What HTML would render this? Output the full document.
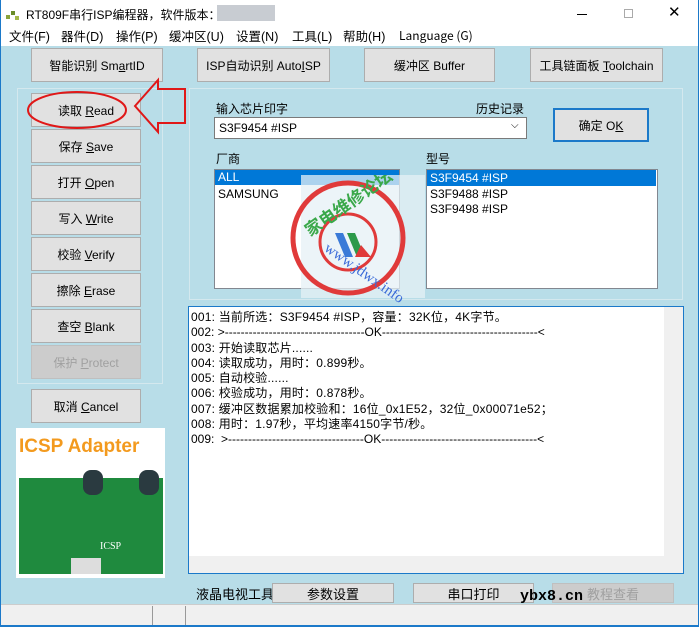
<!DOCTYPE html>
<html><head><meta charset="utf-8"><style>
*{box-sizing:border-box;margin:0;padding:0}
body{width:699px;height:627px;overflow:hidden;background:#fff;font-family:"Liberation Sans","Noto Sans CJK SC",sans-serif;font-size:12px;color:#000;position:relative}
.a{position:absolute}
.btn{position:absolute;background:#e1e1e1;border:1px solid #adadad;text-align:center;font-size:12px;display:flex;align-items:center;justify-content:center}
.dis{color:#a0a0a0;background:#cccccc;border-color:#bfbfbf}
.grp{position:absolute;border:1px solid #d4e8ee;}
u{text-decoration:underline}
.log div{height:15.3px;line-height:15.3px;white-space:nowrap;letter-spacing:0.2px}
.log .d{letter-spacing:0}
.m{position:absolute;top:29px;font-size:12.5px;line-height:16px;height:16px}
</style></head><body>
<div class="a" style="left:0;top:0;width:699px;height:627px;border:1px solid #1b79c9;border-top:none"></div>
<!-- title -->
<div class="a" style="left:6px;top:10px;width:14px;height:10px">
<div class="a" style="left:0;top:5px;width:4px;height:4px;background:#8aa33a"></div>
<div class="a" style="left:5px;top:1px;width:4px;height:4px;background:#6b8d2a"></div>
<div class="a" style="left:9px;top:6px;width:4px;height:4px;background:#a4b94a"></div></div>
<div class="a" style="left:26px;top:6px;font-size:12px">RT809F串行ISP编程器，软件版本：</div>
<div class="a" style="left:217px;top:5px;width:58px;height:16px;background:#c8ccd2"></div>
<div class="a" style="left:577px;top:14px;width:10px;height:1px;background:#000"></div>
<div class="a" style="left:624px;top:9px;width:9px;height:9px;border:1px solid #aaa"></div>
<div class="a" style="left:668px;top:3px;font-size:15px">✕</div>
<!-- menu -->
<div class="m" style="left:9px">文件(F)</div>
<div class="m" style="left:61px">器件(D)</div>
<div class="m" style="left:116px">操作(P)</div>
<div class="m" style="left:169px">缓冲区(U)</div>
<div class="m" style="left:236px">设置(N)</div>
<div class="m" style="left:292px">工具(L)</div>
<div class="m" style="left:343px">帮助(H)</div>
<div class="m" style="left:399px;font-family:'Noto Sans CJK SC',sans-serif;font-size:12px;top:28px">Language (G)</div>
<!-- body -->
<div class="a" style="left:1px;top:46px;width:697px;height:558px;background:#b8dde8"></div>
<div class="btn" style="left:31px;top:48px;width:132px;height:34px"><span>智能识别 Sm<u>a</u>rtID</span></div>
<div class="btn" style="left:197px;top:48px;width:133px;height:34px"><span>ISP自动识别 Auto<u>I</u>SP</span></div>
<div class="btn" style="left:364px;top:48px;width:131px;height:34px"><span>缓冲区 Buffer</span></div>
<div class="btn" style="left:530px;top:48px;width:133px;height:34px"><span>工具链面板 <u>T</u>oolchain</span></div>
<div class="grp" style="left:17px;top:88px;width:146px;height:296px"></div>
<div class="btn" style="left:31px;top:93px;width:110px;height:34px"><span>读取 <u>R</u>ead</span></div>
<div class="btn" style="left:31px;top:129px;width:110px;height:34px"><span>保存 <u>S</u>ave</span></div>
<div class="btn" style="left:31px;top:165px;width:110px;height:34px"><span>打开 <u>O</u>pen</span></div>
<div class="btn" style="left:31px;top:201px;width:110px;height:34px"><span>写入 <u>W</u>rite</span></div>
<div class="btn" style="left:31px;top:237px;width:110px;height:34px"><span>校验 <u>V</u>erify</span></div>
<div class="btn" style="left:31px;top:273px;width:110px;height:34px"><span>擦除 <u>E</u>rase</span></div>
<div class="btn" style="left:31px;top:309px;width:110px;height:34px"><span>查空 <u>B</u>lank</span></div>
<div class="btn dis" style="left:31px;top:345px;width:110px;height:34px"><span>保护 <u>P</u>rotect</span></div>
<div class="btn" style="left:31px;top:389px;width:110px;height:34px"><span>取消 <u>C</u>ancel</span></div>
<!-- red annotations -->
<svg class="a" style="left:0;top:75px" width="200" height="70">
<ellipse cx="77" cy="35" rx="49" ry="18" fill="none" stroke="#e01818" stroke-width="2"/>
<polygon points="135,31 158,5 158,14 185,14 185,48 158,48 158,57" fill="none" stroke="#e01818" stroke-width="2"/>
</svg>
<!-- ICSP image -->
<div class="a" style="left:16px;top:428px;width:149px;height:150px;background:#fff"></div>
<div class="a" style="left:19px;top:436px;color:#f39a1e;font-weight:bold;font-size:19px">ICSP Adapter</div>
<div class="a" style="left:19px;top:478px;width:144px;height:96px;background:#1f8a3e"></div>
<div class="a" style="left:71px;top:558px;width:30px;height:16px;background:#ddd"></div>
<div class="a" style="left:83px;top:470px;width:20px;height:25px;background:#2a3a40;border-radius:8px"></div>
<div class="a" style="left:139px;top:470px;width:20px;height:25px;background:#2a3a40;border-radius:8px"></div>
<div class="a" style="left:100px;top:541px;color:#fff;font-size:10px;font-family:'Liberation Serif',serif">ICSP</div>
<!-- right group -->
<div class="grp" style="left:189px;top:88px;width:494px;height:212px"></div>
<div class="a" style="left:216px;top:100px">输入芯片印字</div>
<div class="a" style="left:476px;top:100px">历史记录</div>
<div class="a" style="left:214px;top:117px;width:313px;height:22px;background:#fff;border:1px solid #7a7a7a;padding:3px 4px">S3F9454 #ISP</div>
<div class="a" style="left:511px;top:120px;font-size:10px">⌵</div>
<div class="btn" style="left:553px;top:108px;width:96px;height:34px;border:2px solid #1b79c9"><span>确定 O<u>K</u></span></div>
<div class="a" style="left:216px;top:150px">厂商</div>
<div class="a" style="left:426px;top:150px">型号</div>
<div class="a" style="left:214px;top:169px;width:186px;height:120px;background:#fff;border:1px solid #828790"></div>
<div class="a" style="left:215px;top:170px;width:184px;height:15px;background:#0078d7;color:#fff;padding-left:3px;line-height:15px">ALL</div>
<div class="a" style="left:218px;top:187px">SAMSUNG</div>
<div class="a" style="left:426px;top:169px;width:232px;height:120px;background:#fff;border:1px solid #828790"></div>
<div class="a" style="left:427px;top:170px;width:229px;height:16px;background:#0078d7;color:#fff;padding-left:3px;line-height:16px">S3F9454 #ISP</div>
<div class="a" style="left:430px;top:187px;line-height:15px">S3F9488 #ISP<br>S3F9498 #ISP</div>
<!-- watermark -->
<div class="a" style="left:301px;top:175px;width:124px;height:123px;background:rgba(230,240,245,.75)"></div>
<svg class="a" style="left:285px;top:175px" width="130" height="130">
<circle cx="63" cy="63" r="55" fill="none" stroke="#e03a3a" stroke-width="5"/>
<circle cx="63" cy="67" r="28" fill="none" stroke="#e03a3a" stroke-width="3"/>
<polygon points="50,58 58,58 68,82 60,82" fill="#3a7ad8"/>
<polygon points="62,58 70,58 80,82 72,82" fill="#2c9a4a"/>
<polygon points="76,70 86,82 70,82" fill="#e03a3a"/>
<text x="22" y="58" fill="#3aa84a" font-size="17" font-weight="bold" font-family="Noto Sans CJK SC" transform="rotate(-35 30 55)">家电维修论坛</text>
<text x="28" y="92" fill="#3a6ad8" font-size="15" font-family="Liberation Serif" transform="rotate(35 60 100)">www.jdwx.info</text>
</svg>
<!-- log -->
<div class="a" style="left:188px;top:306px;width:496px;height:268px;background:#fff;border:1px solid #1b79c9"></div>
<div class="a" style="left:664px;top:307px;width:19px;height:266px;background:#f0f0f0"></div>
<div class="a" style="left:189px;top:556px;width:475px;height:17px;background:#f0f0f0"></div>
<div class="a log" style="left:191px;top:310px">
<div>001: 当前所选：S3F9454 #ISP，容量：32K位，4K字节。</div>
<div class="d">002: &gt;-----------------------------------OK---------------------------------------&lt;</div>
<div>003: 开始读取芯片......</div>
<div>004: 读取成功，用时：0.899秒。</div>
<div>005: 自动校验......</div>
<div>006: 校验成功，用时：0.878秒。</div>
<div>007: 缓冲区数据累加校验和：16位_0x1E52，32位_0x00071e52；</div>
<div>008: 用时：1.97秒，平均速率4150字节/秒。</div>
<div class="d">009: &nbsp;&gt;----------------------------------OK---------------------------------------&lt;</div>
</div>
<!-- bottom -->
<div class="a" style="left:196px;top:584px;font-size:13px">液晶电视工具</div>
<div class="btn" style="left:272px;top:583px;width:122px;height:20px;font-size:13px">参数设置</div>
<div class="btn" style="left:413px;top:583px;width:121px;height:20px;font-size:13px">串口打印</div>
<div class="btn dis" style="left:552px;top:583px;width:122px;height:20px;font-size:13px">教程查看</div>
<div class="a" style="left:520px;top:588px;font-family:'Liberation Mono',monospace;font-size:15px;font-weight:bold">ybx8.cn</div>
<!-- status -->
<div class="a" style="left:1px;top:604px;width:697px;height:22px;background:#f0f0f0;border-top:1px solid #ccc"></div>
<div class="a" style="left:152px;top:606px;width:1px;height:20px;background:#999"></div>
<div class="a" style="left:185px;top:606px;width:1px;height:20px;background:#999"></div>
<div class="a" style="left:0;top:625px;width:699px;height:2px;background:#1b79c9"></div>
</body></html>
